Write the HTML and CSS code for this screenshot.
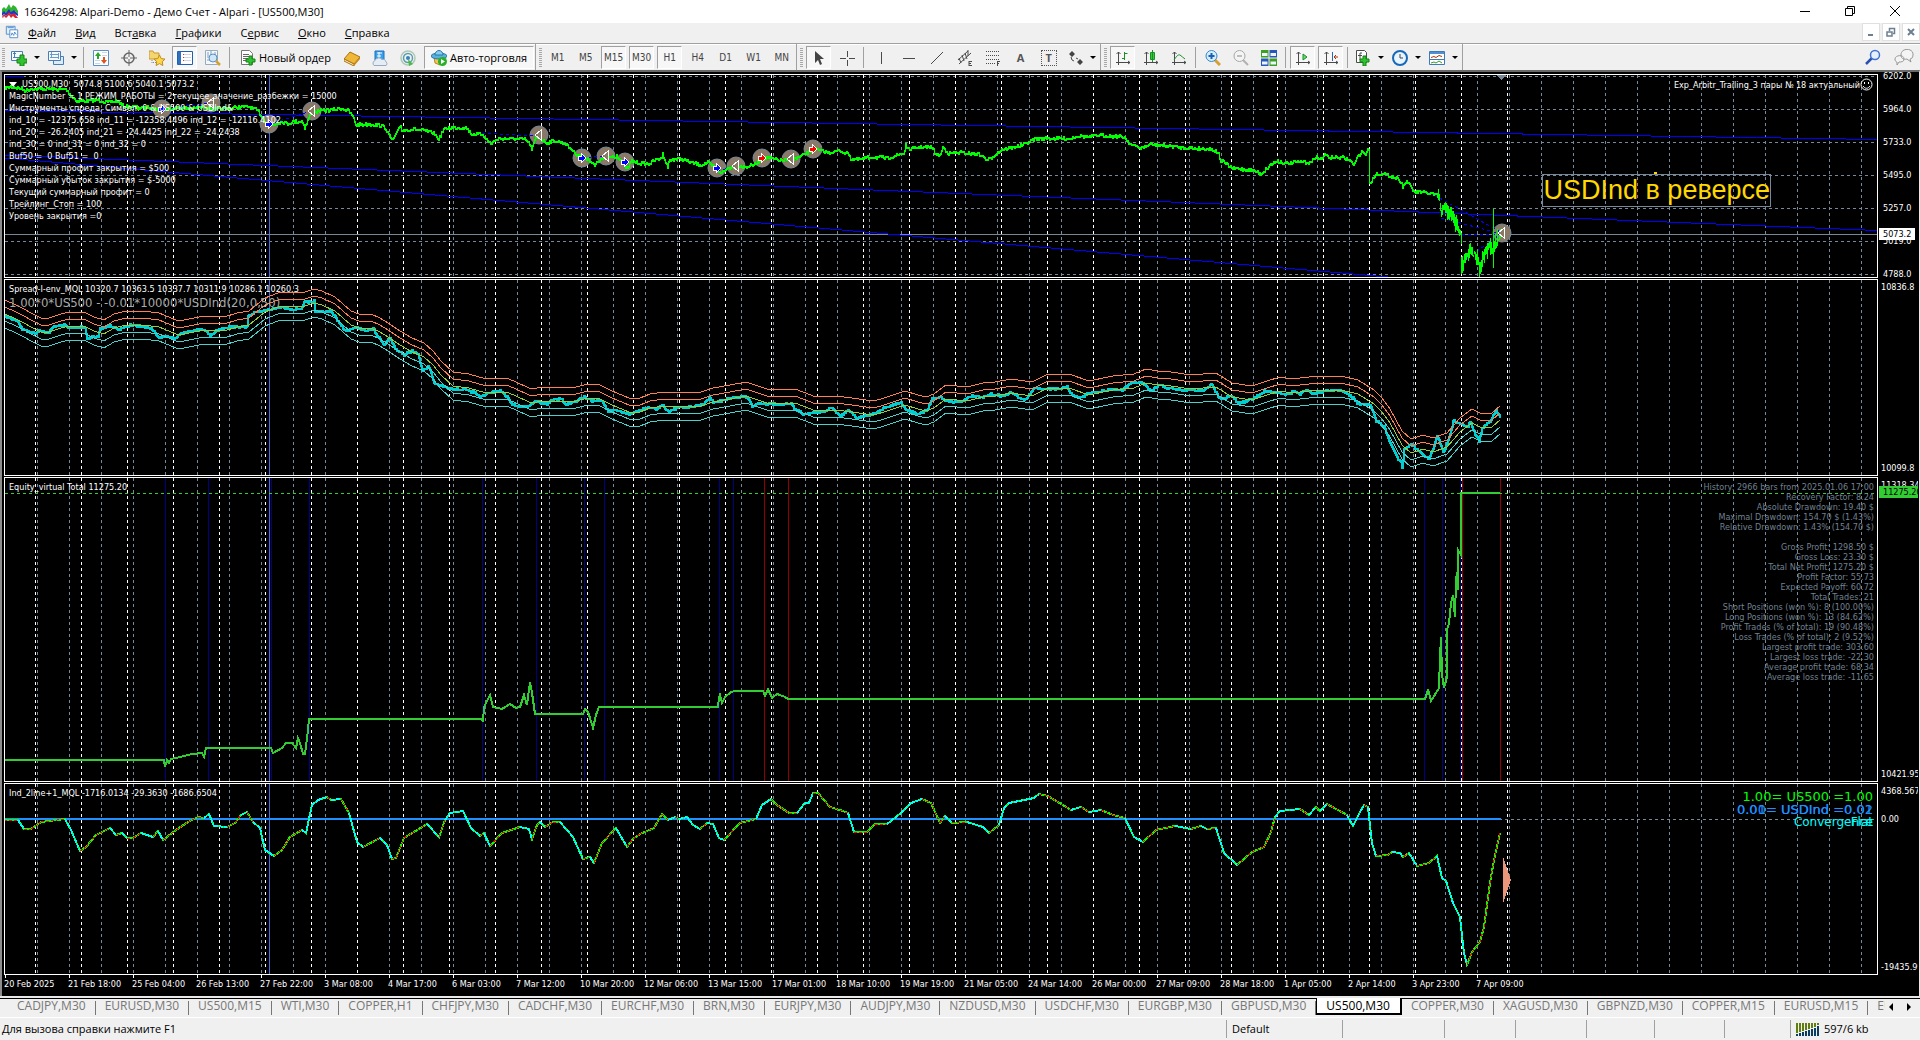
FILE: index.html
```html
<!DOCTYPE html>
<html lang="ru">

<head>
  <meta charset="UTF-8">
  <meta name="viewport" content="width=device-width, initial-scale=1.0">
  <title>16364298: Alpari-Demo - Демо Счет - Alpari - [US500,M30]</title>
  <link rel="stylesheet" href="styles.css">
</head>

<body>
  <header class="titlebar">
    <svg class="logo" viewBox="0 0 16 16">
      <path d="M0 6l2-2 2 2 3-5 2 4 2-3 3 2 2 4v3l-3-3-3 2-2-2-3 4-2-3-3 2z" fill="#2db52d" />
      <path d="M0 10l2-2 2 2 3-4 2 3 3-2 4 4v2l-4-2-3 1-2-2-3 3-2-2-2 2z" fill="#2438c8" />
      <path d="M0 14l2-3 2 2 3-4 2 3 3-2 4 5H13l-2-2-2 2-2-3-3 3-2-2-1 2z" fill="#d8242c" />
    </svg>
    <span class="caption">16364298: Alpari-Demo - Демо Счет - Alpari - [US500,M30]</span>
    <div class="window_buttons">
      <button aria-label="Свернуть"><svg viewBox="0 0 10 10"><path d="M0 5.5h10" /></svg></button>
      <button aria-label="Восстановить"><svg viewBox="0 0 10 10"><path d="M.5 2.5h7v7h-7zM2.500 2.500v-2h7v7h-2" /></svg></button>
      <button aria-label="Закрыть"><svg viewBox="0 0 10 10"><path d="M0 0l10 10M10 0L0 10" /></svg></button>
    </div>
  </header>

  <nav class="menubar">
    <svg class="menu_icon" viewBox="0 0 16 16">
      <path d="M1.500 1.500h10v9h-10z" fill="#e4f0fb" stroke="#4a86c8" />
      <path d="M5.500 5.500h9v9h-9z" fill="#fff" stroke="#4a86c8" />
      <path d="M3 3h7M7 12l1-3 2 3 1-4 2 3" fill="none" stroke="#4a86c8" />
    </svg>
    <button><u>Ф</u>айл</button>
    <button><u>В</u>ид</button>
    <button>Вст<u>а</u>вка</button>
    <button><u>Г</u>рафики</button>
    <button>С<u>е</u>рвис</button>
    <button><u>О</u>кно</button>
    <button><u>С</u>правка</button>
    <div class="mdi_buttons">
      <button aria-label="Свернуть окно"><svg viewBox="0 0 10 10"><path d="M2 8h5" /></svg></button>
      <button aria-label="Восстановить окно"><svg viewBox="0 0 10 10"><path d="M1 5h5v4H1zM3.500 4V1.500h5v5H7" stroke-width="1.500" /></svg></button>
      <button aria-label="Закрыть окно"><svg viewBox="0 0 10 10"><path d="M2 2l6 6M8 2L2 8" /></svg></button>
    </div>
  </nav>

  <div class="toolbar">
    <div class="group">
      <i class="grip"></i>
      <button class="drop" aria-label="Новый график">
        <svg viewBox="0 0 16 16">
          <path d="M.5 1.500h11v9H.5z" fill="#f4f9ff" stroke="#4a7eb0" />
          <path d="M3.500 2v6M2 7.500h8M2 3.500h3" stroke="#4a7eb0" fill="none" />
          <path d="M9 5h4v4h3v4h-3v3H9v-3H6V9h3z" fill="#2fc42f" stroke="#178017" />
        </svg>
      </button>
      <button class="drop" aria-label="Профили">
        <svg viewBox="0 0 16 16">
          <path d="M5.500 6.500h10v8h-10z" fill="#dcebfa" stroke="#4a7eb0" />
          <path d="M.5 1.500h12v9H.5z" fill="#f4f9ff" stroke="#4a7eb0" />
          <path d="M3.500 2v6M2 4.500h9M2 7.500h9M10.500 3v6" stroke="#6a9ac8" fill="none" />
        </svg>
      </button>
      <i class="sep"></i>
      <button aria-label="Обзор рынка">
        <svg viewBox="0 0 16 16">
          <path d="M.5.500h15v15H.5z" fill="#fff" stroke="#5a90c8" />
          <path d="M9 2.500h5M9 5.500h5M2 10.500h5M2 13.500h5" stroke="#c8d8e8" />
          <path d="M5 2l3 4H6v3H4V6H2z" fill="#2aa82a" />
          <path d="M11 14L8 10h2V7h2v3h2z" fill="#e05020" />
        </svg>
      </button>
      <button aria-label="Окно данных">
        <svg viewBox="0 0 16 16">
          <circle cx="8" cy="8" r="5" fill="none" stroke="#666" stroke-width="1.500" />
          <path d="M8 0v7M8 9v7M0 8h7M9 8h7" stroke="#666" />
        </svg>
      </button>
      <button aria-label="Навигатор">
        <svg viewBox="0 0 16 16">
          <path d="M0 1h4l1 2h5v6H0z" fill="#f5d570" stroke="#c89830" />
          <path d="M3 10v3M4 12.500h3" stroke="#888" stroke-dasharray="1 1" />
          <path d="M10.500 5l1.700 3.600 3.800.5-2.800 2.600.7 3.800-3.400-1.900-3.400 1.900.7-3.800L5 9.100l3.800-.5z" fill="#ffd84a" stroke="#c08a20" />
        </svg>
      </button>
      <button class="pressed" aria-label="Терминал">
        <svg viewBox="0 0 16 16">
          <path d="M.5 1.500h15v13H.5z" fill="#fff" stroke="#2060b0" />
          <path d="M1 2h3v12H1z" fill="#3070c0" />
          <path d="M6 4.500h8M6 7.500h8M6 10.500h8" stroke="#c8d8e8" />
          <path d="M6 4.500h1M6 7.500h1M6 10.500h1" stroke="#d04020" />
        </svg>
      </button>
      <button aria-label="Тестер стратегий">
        <svg viewBox="0 0 16 16">
          <path d="M.5.500h12v14H.5z" fill="#f4f8fc" stroke="#9ab" />
          <path d="M3 2v6M6 1v6M10 2v6M2 10h4" stroke="#7aa0c0" />
          <circle cx="8" cy="8" r="4" fill="#cfe6f8" stroke="#5a90c0" />
          <path d="M11 11l4 4" stroke="#d8a030" stroke-width="2.500" />
        </svg>
      </button>
      <i class="sep"></i>
      <button class="wide">
        <svg viewBox="0 0 16 16">
          <path d="M1.500.500h8l3 3v11h-11z" fill="#fff" stroke="#777" />
          <path d="M3 4.500h6M3 6.500h6M3 8.500h5M3 10.500h4" stroke="#666" />
          <path d="M9 6h3v3h3v3h-3v3H9v-3H6V9h3z" fill="#2fc42f" stroke="#178017" />
        </svg>Новый ордер
      </button>
      <button aria-label="MetaEditor">
        <svg viewBox="0 0 16 16">
          <path d="M0 9l6-7 10 5-6 7z" fill="#f0b838" stroke="#a87010" />
          <path d="M0 9v2l10 5v-2z" fill="#fff2c8" stroke="#a87010" />
          <path d="M10 16l6-7V7l-6 7z" fill="#c88818" />
        </svg>
      </button>
      <button aria-label="MQL5 Storage">
        <svg viewBox="0 0 16 16">
          <path d="M3 1h9v9H3z" fill="#3aa0ec" stroke="#1870c0" />
          <path d="M5 3h5M5 6h4M7 2v6" stroke="#fff" />
          <path d="M2 15.500a3 3 0 0 1 1-5 4 4 0 0 1 7-1 3 3 0 0 1 4 2.500 2 2 0 0 1 0 3.500z" fill="#e4ecf4" stroke="#98a8c0" />
        </svg>
      </button>
      <button aria-label="Сигналы">
        <svg viewBox="0 0 16 16">
          <circle cx="8" cy="8" r="7" fill="none" stroke="#b0c8b8" stroke-width="1.500" />
          <circle cx="8" cy="8" r="4.500" fill="none" stroke="#58a0a8" stroke-width="1.500" />
          <circle cx="8" cy="8" r="2" fill="#3880c0" />
          <path d="M8 9l1 7 4-2z" fill="#4cb848" />
        </svg>
      </button>
      <button class="wide pressed">
        <svg viewBox="0 0 16 16">
          <path d="M3 7h10v4l-4 4-5-2z" fill="#f0c850" stroke="#b88820" />
          <ellipse cx="8" cy="6" rx="8" ry="3" fill="#58b0e0" stroke="#2878a8" />
          <path d="M4 5a4 4.500 0 0 1 8 0z" fill="#88ccf0" stroke="#2878a8" />
          <circle cx="11.500" cy="11.500" r="4.500" fill="#28b028" />
          <path d="M10 9l4 2.500-4 2.500z" fill="#fff" />
        </svg>Авто-торговля
      </button>
    </div>

    <div class="group timeframes">
      <i class="grip"></i>
      <button>M1</button>
      <button>M5</button>
      <button class="pressed">M15</button>
      <button class="pressed">M30</button>
      <button class="pressed">H1</button>
      <button>H4</button>
      <button>D1</button>
      <button>W1</button>
      <button>MN</button>
    </div>

    <div class="group mono">
      <i class="grip"></i>
      <button class="pressed" aria-label="Курсор"><svg viewBox="0 0 16 16"><path d="M4 1v12l3-3 2 5 2-1-2-5h4z" fill="#444" stroke="none" /></svg></button>
      <button aria-label="Перекрестие"><svg viewBox="0 0 16 16"><path d="M8.500 1v6M8.500 10v6M1 8.500h6M10 8.500h6" /></svg></button>
      <i class="sep"></i>
      <button aria-label="Вертикальная линия"><svg viewBox="0 0 16 16"><path d="M8.500 2v12" /></svg></button>
      <button aria-label="Горизонтальная линия"><svg viewBox="0 0 16 16"><path d="M2 8.500h12" /></svg></button>
      <button aria-label="Трендовая линия"><svg viewBox="0 0 16 16"><path d="M2 14L14 2" /></svg></button>
      <button aria-label="Канал"><svg viewBox="0 0 16 16"><path d="M1 10L11 1M2 14L14 3M2 8l2 5M5 5l2 6M8 3l2 6M11 0v6M12 11v5M12 11.500h3M12 13.500h2M12 15.500h3" /></svg></button>
      <button aria-label="Фибоначчи"><svg viewBox="0 0 16 16"><path d="M1 1.500h14M1 5.500h14M1 9.500h14M1 13.500h9" stroke-dasharray="1 1" /><path d="M12.500 11v5M12 11.500h3M12 13.500h2" /></svg></button>
      <button class="letter" aria-label="Текст">A</button>
      <button class="letter boxed" aria-label="Метка">T</button>
      <button class="drop" aria-label="Стрелки"><svg viewBox="0 0 16 16"><path d="M5 1l3 3-3 3-3-3zM13 9l3 3-3 3-3-3z" fill="#444" stroke="none" /><path d="M4 7l1 3 2 1M9 8l2 1" /></svg></button>
    </div>

    <div class="group axes">
      <i class="grip"></i>
      <button class="pressed" aria-label="Бары"><svg viewBox="0 0 16 16"><path d="M3.500 2v13M1 12.500h14M1.500 4l2-2 2 2M13 11l2 1.500-2 1.500" /><path d="M9.500 2v8M9.500 3.500h3M7 8.500h2.500" class="green" /></svg></button>
      <button aria-label="Свечи"><svg viewBox="0 0 16 16"><path d="M3.500 2v13M1 12.500h14M1.500 4l2-2 2 2M13 11l2 1.500-2 1.500" /><path d="M9.500 0v12M7.500 2.500h4v7h-4z" class="green" fill="#3c3" /></svg></button>
      <button aria-label="Линия"><svg viewBox="0 0 16 16"><path d="M3.500 2v13M1 12.500h14M1.500 4l2-2 2 2M13 11l2 1.500-2 1.500" /><path d="M3 10c2-3 4-6 6-5s3 3 5 4" class="green" /></svg></button>
      <i class="sep"></i>
      <button aria-label="Увеличить"><svg viewBox="0 0 16 16"><path d="M10 10l5 5" stroke="#d8a030" stroke-width="3" /><circle cx="6.500" cy="6" r="5.500" fill="#d4ecfc" stroke="#3888c8" /><path d="M3.500 6h6M6.500 3v6" stroke="#1860b0" stroke-width="2" /></svg></button>
      <button aria-label="Уменьшить"><svg viewBox="0 0 16 16"><path d="M10 10l5 5" stroke="#b0b0b0" stroke-width="2" /><circle cx="6.500" cy="6" r="5.500" fill="#f4f4f4" stroke="#a8a8a8" /><path d="M4 6h5" stroke="#888" /></svg></button>
      <button aria-label="Плитка">
        <svg viewBox="0 0 16 16">
          <path d="M0 0h7.500v7.500H0zM8.500 8.500H16V16H8.500z" fill="#3fa020" stroke="none" />
          <path d="M8.500 0H16v7.500H8.500zM0 8.500h7.500V16H0z" fill="#2858b8" stroke="none" />
          <path d="M1 3h5.500v3H1zM9.500 3H15v3H9.500zM1 11.500h5.500v3H1zM9.500 11.500H15v3H9.500z" fill="#eef4ff" stroke="none" />
        </svg>
      </button>
      <i class="sep"></i>
      <button class="pressed" aria-label="Автопрокрутка"><svg viewBox="0 0 16 16"><path d="M3.500 2v13M1 12.500h14M1.500 4l2-2 2 2M13 11l2 1.500-2 1.500" /><path d="M8 4l4 3-4 3z" class="green" fill="#6d6" /></svg></button>
      <button class="pressed" aria-label="Сдвиг графика"><svg viewBox="0 0 16 16"><path d="M3.500 2v13M1 12.500h14M1.500 4l2-2 2 2M13 11l2 1.500-2 1.500" /><path d="M9.500 2v9" stroke="#2868b0" /><path d="M15 7h-4M13 5l-2 2 2 2" stroke="#b03010" /></svg></button>
      <i class="sep"></i>
      <button class="drop" aria-label="Индикаторы">
        <svg viewBox="0 0 16 16">
          <path d="M1.500.500h8l2 2v10h-10z" fill="#fff" />
          <path d="M7 3H5v7M3 5.500h4" />
          <path d="M8 6h3v3h3v3h-3v4H8v-4H5V9h3z" fill="#2fc42f" stroke="#178017" />
        </svg>
      </button>
      <button class="drop" aria-label="Периоды"><svg viewBox="0 0 16 16"><circle cx="8" cy="8" r="7" fill="#e8f4ff" stroke="#1868b8" stroke-width="2" /><path d="M8 4v4h3" stroke="#444" /></svg></button>
      <button class="drop" aria-label="Шаблоны">
        <svg viewBox="0 0 16 16">
          <path d="M.5 1.500h15v13H.5z" fill="#fff" stroke="#4078b8" />
          <path d="M1 2h14v2H1z" fill="#5090d0" stroke="none" />
          <path d="M2 7.500l3-1 2 1 3-2 3 1" stroke="#b03010" />
          <path d="M1 9.500h14" stroke="#4078b8" />
          <path d="M2 13l3-1 2 1 3-2 3 2" stroke="#30a030" />
        </svg>
      </button>
    </div>

    <div class="toolbar_right">
      <button aria-label="Поиск"><svg viewBox="0 0 16 16"><path d="M7 9l-6 6" stroke="#2850b0" stroke-width="2.500" /><circle cx="10" cy="6" r="4.500" fill="#e4f0fc" stroke="#4070d0" stroke-width="1.500" /></svg></button>
      <button aria-label="Чат"><svg class="chat" viewBox="0 0 20 16"><path d="M7 6c0-8 13-7 12 0 0 3-2 4-3 4l1 3-4-3C9 11 7 9 7 6zM1 10c0-4 9-5 9 0 0 3-3 3-5 3l-2 3v-3c-1 0-2-1-2-3z" fill="#f4f4f4" stroke="#989898" /></svg></button>
    </div>
  </div>

  <main class="chart">
    <section class="row price">
      <div class="panel">
        <svg class="plot" data-plot="price" viewBox="5 75 1872 202" preserveAspectRatio="none"></svg>
        <div class="legend">
          <p class="symbol">US500,M30&nbsp; 5074.8 5100.6 5040.1 5073.2</p>
          <p>MagicNumber = 1 РЕЖИМ_РАБОТЫ = 2текущее_значение_разбежки = 15000</p>
          <p>Инструменты спреда, Символ: 0 &amp; US500 &amp; USDInd&amp;</p>
          <p>ind_10 = -12375.658 ind_11 = -12358.4496 ind_12 = -12116.4102</p>
          <p>ind_20 = -26.2405 ind_21 = -24.4425 ind_22 = -24.2438</p>
          <p>ind_30 = 0 ind_31 = 0 ind_32 = 0</p>
          <p>Buf50 = &nbsp;0 Buf51 = &nbsp;0</p>
          <p>Суммарный профит закрытия = $500</p>
          <p>Суммарный убыток закрытия = $-5000</p>
          <p>Текущий суммарный профит = 0</p>
          <p>Трейлинг_Стоп = 100</p>
          <p>Уровень закрытия =0</p>
        </div>
        <div class="expert">Exp_Arbitr_Trailing_3 пары № 18 актуальный<svg viewBox="0 0 13 13"><circle cx="6.500" cy="6.500" r="5.500" /><path d="M4.500 4v2M8.500 4v2M3 8c2 3 5 3 7 0" /></svg></div>
        <div class="note">USDInd в реверсе</div>
      </div>
      <div class="scale">
        <span>6202.0</span><span>5964.0</span><span>5733.0</span><span>5495.0</span><span>5257.0</span><span>5019.0</span><span>4788.0</span>
        <b class="tag current">5073.2</b>
      </div>
    </section>

    <section class="row spread">
      <div class="panel">
        <svg class="plot" data-plot="spread" viewBox="5 280 1872 195" preserveAspectRatio="none"></svg>
        <div class="legend">
          <p>Spread-I-env_MQL 10320.7 10363.5 10337.7 10311.9 10286.1 10260.3</p>
          <p class="formula">1.00*0*US500 - -0.01*10000*USDInd(20,0,50)</p>
        </div>
      </div>
      <div class="scale"><span>10836.8</span><span>10099.8</span></div>
    </section>

    <section class="row equity">
      <div class="panel">
        <svg class="plot" data-plot="equity" viewBox="5 478 1872 303" preserveAspectRatio="none"></svg>
        <div class="legend">
          <p>Equity_virtual Total 11275.20</p>
        </div>
        <div class="stats">
          <p>History: 2966 bars from 2025.01.06 17:00</p>
          <p>Recovery Factor: 8.24</p>
          <p>Absolute Drawdown: 19.40 $</p>
          <p>Maximal Drawdown: 154.70 $ (1.43%)</p>
          <p>Relative Drawdown: 1.43% (154.70 $)</p>
          <p>&nbsp;</p>
          <p>Gross Profit: 1298.50 $</p>
          <p>Gross Loss: 23.30 $</p>
          <p>Total Net Profit: 1275.20 $</p>
          <p>Profit Factor: 55.73</p>
          <p>Expected Payoff: 60.72</p>
          <p>Total Trades: 21</p>
          <p>Short Positions (won %): 8 (100.00%)</p>
          <p>Long Positions (won %): 13 (84.62%)</p>
          <p>Profit Trades (% of total): 19 (90.48%)</p>
          <p>Loss Trades (% of total): 2 (9.52%)</p>
          <p>Largest profit trade: 303.60</p>
          <p>Largest loss trade: -22.30</p>
          <p>Average profit trade: 68.34</p>
          <p>Average loss trade: -11.65</p>
        </div>
      </div>
      <div class="scale"><span>11318.34</span><span>10421.95</span><b class="tag total">11275.20</b></div>
    </section>

    <section class="row lines">
      <div class="panel">
        <svg class="plot" data-plot="lines" viewBox="5 784 1872 190" preserveAspectRatio="none"></svg>
        <div class="legend">
          <p>Ind_2line+1_MQL -1716.0134 -29.3630 -1686.6504</p>
        </div>
        <div class="weights">
          <p class="lime">1.00= US500 =1.00</p>
          <p class="blue"><span>0.00= USDInd =0.02</span><span>0.01= USDInd =0.01</span></p>
          <p class="aqua"><span>Convergence</span><span>Flat</span></p>
        </div>
      </div>
      <div class="scale"><span>4368.567</span><span>-19435.99</span><b class="tag zero">0.00</b></div>
    </section>

    <div class="times"></div>
  </main>

  <div class="tabs" role="tablist">
    <button role="tab">CADJPY,M30</button>
    <button role="tab">EURUSD,M30</button>
    <button role="tab">US500,M15</button>
    <button role="tab">WTI,M30</button>
    <button role="tab">COPPER,H1</button>
    <button role="tab">CHFJPY,M30</button>
    <button role="tab">CADCHF,M30</button>
    <button role="tab">EURCHF,M30</button>
    <button role="tab">BRN,M30</button>
    <button role="tab">EURJPY,M30</button>
    <button role="tab">AUDJPY,M30</button>
    <button role="tab">NZDUSD,M30</button>
    <button role="tab">USDCHF,M30</button>
    <button role="tab">EURGBP,M30</button>
    <button role="tab">GBPUSD,M30</button>
    <button role="tab" class="active" aria-selected="true">US500,M30</button>
    <button role="tab">COPPER,M30</button>
    <button role="tab">XAGUSD,M30</button>
    <button role="tab">GBPNZD,M30</button>
    <button role="tab">COPPER,M15</button>
    <button role="tab">EURUSD,M15</button>
    <button role="tab">EURGBP,M15</button>
    <div class="tab_arrows">
      <button aria-label="Назад"><svg viewBox="0 0 4 8"><path d="M4 0v8L0 4z" /></svg></button>
      <button aria-label="Вперед"><svg viewBox="0 0 4 8"><path d="M0 0v8l4-4z" /></svg></button>
    </div>
  </div>

  <footer class="statusbar">
    <span class="hint">Для вызова справки нажмите F1</span>
    <span class="profile">Default</span>
    <span></span><span></span><span></span><span></span><span></span><span></span>
    <span class="traffic">
      <svg viewBox="0 0 24 13">
        <path d="M1 0v10M4 0v9M7 0v8M10 0v7M13 0v6M16 0v5M19 0v4M22 0v2" stroke="#5f7d10" />
        <path d="M1 11v2M4 10v3M7 9v4M10 8v5M13 7v6M16 6v7M19 5v8M22 3v10" stroke="#0c3c60" />
      </svg>597/6 kb
    </span>
  </footer>

  <script src="script.js"></script>
</body>

</html>
```
FILE: styles.css
```css
* {
  box-sizing: border-box;
}

body {
  margin: 0;
  height: 100vh;
  display: flex;
  flex-direction: column;
  overflow: hidden;
  background-color: #f0f0f0;
  color: #000;
  font-family: "Open Sans", "Noto Sans", sans-serif;
  font-size: 11px;
}

button {
  padding: 0;
  border: none;
  background: none;
  color: inherit;
  font: inherit;
}

p {
  margin: 0;
}

svg {
  display: block;
  fill: none;
}

.titlebar {
  display: flex;
  align-items: center;
  height: 23px;
  padding-bottom: 1px;
  background-color: #fff;
}

.logo {
  width: 16px;
  height: 16px;
  margin: 0 6px 0 2px;
}

.window_buttons {
  display: flex;
  margin-left: auto;
  padding-right: 3px;
}

.window_buttons button {
  display: flex;
  justify-content: center;
  width: 45px;
}

.window_buttons svg {
  width: 10px;
  height: 10px;
  stroke: #000;
}

.menubar {
  display: flex;
  align-items: center;
  gap: 19px;
  height: 20px;
  padding: 0 0 2px 5px;
}

.menu_icon {
  width: 14px;
  height: 14px;
  margin-right: -10px;
}

.mdi_buttons {
  display: flex;
  gap: 2px;
  margin-left: auto;
}

.mdi_buttons button {
  display: flex;
  align-items: center;
  justify-content: center;
  width: 18px;
  height: 18px;
  border: 1px solid #e0e0e0;
  background-color: #fff;
}

.mdi_buttons svg {
  width: 10px;
  height: 10px;
  stroke: #6c7f90;
  stroke-width: 2;
}

.toolbar {
  display: flex;
  height: 27px;
  border-top: 1px solid #a0a0a0;
  box-shadow: inset 0 1px #fff;
}

.group {
  display: flex;
  align-items: center;
  gap: 3px;
  padding: 1px 2px 0 3px;
  border-right: 1px solid #a0a0a0;
}

.group:first-child {
  padding-left: 2px;
  padding-right: 1px;
}

.grip {
  width: 3px;
  height: 20px;
  background: repeating-linear-gradient(#a8a8a8 0 1px, #f0f0f0 1px 2px);
}

.sep {
  width: 1px;
  height: 21px;
  margin: 0 1px;
  background-color: #a0a0a0;
}

.group button {
  display: flex;
  align-items: center;
  justify-content: center;
  width: 25px;
  height: 23px;
}

.group svg,
.toolbar_right svg {
  width: 16px;
  height: 16px;
  flex: none;
}

.group .pressed {
  border: 1px solid #a0a0a0;
  border-right-color: #fff;
  border-bottom-color: #fff;
  background-color: #f7f7f7;
}

.group .drop {
  width: 34px;
  gap: 7px;
}

.drop::after {
  content: "";
  border: 3px solid transparent;
  border-top-color: #000;
  border-bottom: none;
}

.group .wide {
  width: auto;
  gap: 3px;
  padding: 0 6px;
}

.timeframes {
  color: #444;
  font-family: "DejaVu Sans Condensed", "DejaVu Sans", sans-serif;
  font-size: 10px;
}

.mono svg,
.axes svg {
  stroke: #4a4a4a;
}

.axes .green {
  stroke: #18902a;
}

.letter {
  color: #555;
  font-weight: bold;
}

.boxed::before {
  content: "";
  position: absolute;
  width: 14px;
  height: 14px;
  border: 1px dotted #555;
}

.toolbar_right {
  display: flex;
  align-items: center;
  gap: 13px;
  margin-left: auto;
  padding-right: 6px;
}

.toolbar_right .chat {
  width: 20px;
}

/* chart window */
.chart {
  flex: 1;
  min-height: 0;
  display: grid;
  grid-template-rows: 204fr 197fr 305fr 192fr 20px;
  gap: 1px;
  padding: 2px 1px 0 2px;
  border-top: 2px solid #696969;
  border-left: 2px solid #8c8c8c;
  border-right: 1px solid #e8e8e8;
  background-color: #000;
  color: #fff;
  font-family: "DejaVu Sans Condensed", "DejaVu Sans", sans-serif;
  font-size: 9px;
  line-height: 12px;
}

.row {
  display: grid;
  grid-template-columns: 1fr 40px;
  min-height: 0;
}

.panel {
  position: relative;
  min-width: 0;
  min-height: 0;
  border: 1px solid #fff;
}

.plot {
  position: absolute;
  inset: 0;
  width: 100%;
  height: 100%;
  shape-rendering: crispEdges;
}

.legend {
  position: absolute;
  top: 3px;
  left: 4px;
  white-space: nowrap;
}

.symbol {
  display: flex;
  align-items: center;
  gap: 5px;
}

.symbol::before {
  content: "";
  border: 4px solid transparent;
  border-top: 5px solid #fff;
  border-bottom: none;
}

.formula {
  margin-top: 2px;
  color: #a9a9a9;
  font-size: 13px;
}

.expert {
  position: absolute;
  top: 3px;
  right: 4px;
  display: flex;
  align-items: center;
}

.expert svg {
  width: 13px;
  height: 13px;
  stroke: #fff;
}

.note {
  position: absolute;
  top: 99px;
  right: 106px;
  border: 1px solid #778899;
  color: #ffd700;
  font-family: "Liberation Sans", Arial, sans-serif;
  font-size: 27px;
  line-height: 31px;
}

.stats {
  position: absolute;
  top: 4px;
  right: 3px;
  color: #708090;
  line-height: 10px;
  text-align: right;
}

.weights {
  position: absolute;
  top: 6px;
  right: 4px;
  font-family: "DejaVu Sans", sans-serif;
  font-size: 13px;
  line-height: 13px;
}

.weights p {
  display: grid;
  justify-items: end;
}

/* the indicator prints both states on top of each other */
.weights span {
  grid-area: 1 / 1;
}

.lime {
  color: #0f0;
}

.blue {
  color: #1e90ff;
}

.aqua {
  color: #0ff;
  font-size: 12px;
}

.scale {
  position: relative;
  display: flex;
  flex-direction: column;
  justify-content: space-between;
  min-height: 0;
  padding: 2px 0 2px 3px;
  overflow: hidden;
}

.price .scale {
  margin: -4px 0 -2px;
  padding: 0 0 0 5px;
}

.tag {
  position: absolute;
  left: 3px;
  font-weight: normal;
}

.current {
  top: 75%;
  left: 1px;
  width: 36px;
  padding-left: 4px;
  background-color: #fff;
  color: #000;
}

.total {
  top: 9px;
  left: 1px;
  right: 0;
  padding-left: 4px;
  background-color: #32cd32;
  color: #000;
}

.zero {
  top: 30px;
}

.times {
  display: flex;
  padding-top: 2px;
  white-space: nowrap;
}

.times time {
  position: relative;
  width: 64px;
}

.times time::before {
  content: "";
  position: absolute;
  top: -3px;
  left: 1px;
  width: 1px;
  height: 3px;
  background-color: #fff;
}

.tabs {
  display: flex;
  height: 22px;
  padding: 0 0 2px 8px;
  border-top: 2px solid #e8e8e8;
  border-bottom: 1px solid #fff;
  box-shadow: inset 0 1px #000;
  color: #777;
  font-size: 12px;
  line-height: 16px;
  overflow: hidden;
  position: relative;
}

.tabs > button {
  position: relative;
  flex: none;
  padding: 0 10px 1px 9px;
}

.tabs > button::after {
  content: "";
  position: absolute;
  top: 3px;
  right: 0;
  width: 1px;
  height: 14px;
  background-color: #777;
}

.tabs > .active {
  border: 1px solid #000;
  border-width: 0 2px 2px 1px;
  background-color: #fff;
  color: #000;
}

.tabs > .active::after {
  display: none;
}

.tab_arrows {
  position: absolute;
  right: 0;
  top: 1px;
  bottom: 2px;
  display: flex;
  align-items: center;
  gap: 14px;
  padding: 0 9px 0 4px;
  background-color: #f0f0f0;
}

.tab_arrows svg {
  width: 4px;
  height: 8px;
  fill: #000;
}

.statusbar {
  display: grid;
  grid-template-columns: 1fr 116px 102px 71px 71px 68px 70px 66px 130px;
  height: 22px;
  padding: 2px 0;
  line-height: 18px;
}

.statusbar span {
  padding-left: 5px;
  border-left: 1px solid #a0a0a0;
}

.statusbar .hint {
  padding-left: 2px;
  border-left: none;
}

.traffic {
  display: flex;
  align-items: center;
  gap: 4px;
}

.traffic svg {
  width: 24px;
  height: 13px;
  stroke-width: 2;
}
```
FILE: script.js
```js
"use strict"

const LEFT = 5;
const RIGHT = 1877;
const NS = "http://www.w3.org/2000/svg";

// series are stored as "x,y" samples in blocks, 2.45 units per bar pixel and 3 per value pixel
function block(x0, y0, text, kx = 2.45) {
  return text.trim().split(/\s+/).map(pair => {
    const [x, y] = pair.split(",").map(Number);
    return [x0 + x / kx, y0 + y / 3];
  });
}

const price = [
  ...block(0, 0, "11,262 25,258 50,262 58,270 70,264 160,265 170,280 185,300 210,300 240,297 262,305 285,300 300,315 320,317 345,322 360,318 390,325 410,325 430,320 470,323 500,318 530,325 590,318 610,318 630,330 650,365 665,372 690,362 705,368 720,362 740,362 745,380 760,335 790,328 810,328 830,322 850,328 862,345 870,372 900,370 925,372 940,378 955,410 960,418 975,385 979,370 983,388 1010,385 1040,390 1060,395 1073,415 1085,385 1100,380 1140,380 1155,400 1180,400 1190,415 1200,428 1220,412 1285,415 1297,432 1301,448 1310,410 1320,410 1335,425 1360,420 1385,430 1410,460 1440,475 1455,495 1465,480 1480,470 1510,465 1520,480 1535,505 1545,480 1568,488"),
  ...block(640, 0, "10,488 20,488 40,475 52,470 54,452 58,475 66,498 70,480 80,475 105,475 125,485 150,492 165,485 190,510 200,515 215,500 240,495 260,498 280,490 295,475 310,470 340,478 370,478 390,468 400,460 425,445 460,455 485,450 510,458 515,475 535,475 570,468 605,472 630,462 645,455 650,433 655,445 690,438 715,440 722,462 735,462 740,438 755,458 785,455 830,460 850,478 865,465 885,445 930,435 965,415 1000,412 1050,413 1070,405 1100,408 1120,403 1185,408 1200,430 1225,442 1250,430 1290,435 1330,440 1400,445 1415,455 1420,478 1450,502 1500,508 1520,518 1545,490 1560,480 1568,483"),
  ...block(1280, 0, "10,488 50,482 75,485 85,465 95,475 110,462 120,470 150,470 165,475 180,490 190,465 200,450 210,462 215,428 219,545 235,518 255,520 270,525 290,535 300,555 310,540 325,572 350,575 370,577 388,588")
];
const priceFall = block(1280, 0, "388,588 395,640 405,620 420,650 435,680 443,715");
const priceTail = block(1280, 0, "445,795 465,755 480,770 488,800 505,755 510,740 520,750 527,735 535,715 540,700");

const middle = [
  ...block(0, 280, "11,103 30,110 55,125 80,145 100,155 120,157 150,145 170,137 205,138 230,152 255,163 280,145 300,138 350,135 390,142 430,163 450,163 500,150 550,152 580,142 610,135 650,95 680,82 710,78 740,80 770,70 790,75 820,93 860,135 880,143 910,143 930,155 950,170 980,195 1010,215 1040,230 1060,255 1080,285 1110,318 1150,325 1190,340 1240,335 1260,345 1300,368 1330,362 1410,362 1440,355 1470,356 1500,375 1540,395"),
  ...block(640, 280, "0,395 25,383 60,379 90,382 150,378 180,365 220,357 260,348 310,369 380,369 400,377 430,394 480,390 520,396 570,406 590,400 620,387 650,375 680,387 700,394 720,385 750,357 800,362 840,350 870,348 910,340 960,349 1000,324 1050,323 1100,344 1160,329 1210,325 1240,310 1270,315 1300,318 1350,328 1410,322 1450,350 1500,360 1530,348"),
  ...block(1280, 270, "0,364 30,368 70,363 150,361 190,372 230,403 250,425 270,460 300,525 320,548 350,536 375,545 410,530 440,485 470,460 495,473 520,472 538,450")
];

const spread = [
  ...block(0, 280, "11,108 40,118 55,145 85,158 95,148 120,155 130,135 160,132 170,142 185,137 208,140 212,172 240,165 245,142 270,135 290,145 320,132 370,142 390,170 410,165 430,172 440,158 470,150 490,145 505,150 515,165 530,148 560,138 607,137 608,105 625,95 650,88 690,78 720,86 740,80 745,62 770,65 772,90 800,92 810,88 825,115 845,150 870,140 900,148 915,145 925,165 940,192 955,170 970,205 990,222 1010,208 1025,225 1035,270 1050,258 1065,308 1090,320 1115,325 1130,325 1165,335 1175,350 1200,335 1225,330 1240,345 1255,370 1270,375 1290,378 1310,360 1340,370 1350,358 1375,352 1385,370 1410,362 1430,348 1450,360 1475,360 1490,392 1510,388 1540,400"),
  ...block(640, 280, "0,388 15,380 40,385 55,372 70,392 90,380 130,378 155,370 170,350 180,365 210,355 230,350 255,347 265,352 275,375 290,367 340,370 370,368 380,385 400,398 440,395 470,380 490,405 510,387 530,410 570,400 600,380 640,365 650,385 680,400 705,385 715,355 735,347 745,358 775,365 800,355 810,345 840,350 860,340 890,345 910,335 930,352 945,355 965,320 990,325 1030,322 1045,317 1060,345 1080,350 1100,335 1130,330 1160,325 1180,328 1205,305 1230,305 1250,328 1275,312 1290,322 1330,328 1380,328 1400,310 1420,355 1450,345 1465,368 1500,355 1530,330"),
  ...block(1280, 270, "0,368 25,370 30,360 50,370 65,355 80,368 110,360 150,358 180,380 190,400 220,400 235,450 255,465 265,505 280,545 290,565 300,580 305,535 320,520 345,545 365,565 375,530 385,495 400,545 410,515 425,450 445,460 460,470 465,450 480,495 488,508 495,470 515,450 530,418 538,440")
];

const equity = [
  ...block(0, 470, "11,870 403,870 405,890 410,870 415,880 420,868 440,860 470,852 495,850 500,860 505,834 663,834 670,848 690,835 700,818 715,818 725,835 730,803 735,820 742,852 748,852 755,780 757,747 1180,747 1183,755 1186,710 1200,675 1208,712 1230,717 1250,702 1265,714 1275,710 1285,675 1290,705 1298,635 1303,670 1310,732 1428,732 1433,718 1440,725 1445,745 1453,775 1460,735 1468,712 1480,711 1568,711"),
  ...block(560, 640, "258,201 260,175 262,165 265,190 270,172 280,155 285,153 332,153 335,168 340,147 347,175 355,163 368,172 373,177 1412,177 1415,160 1418,147 1422,183 1430,160 1435,145", 1.633),
  ...block(1280, 270, "389,1250 391,1160 395,1100 397,1215 403,1255 408,1220 410,1080 415,1060 420,1000 425,975 428,1040 430,930 433,905 435,960 437,840 443,855 444,669 538,669")
];

const ratio = [
  ...block(0, 770, "11,150 45,150 60,178 75,178 100,155 160,147 175,180 195,243 210,230 235,195 270,173 283,195 300,188 312,205 325,205 345,190 375,200 387,182 400,210 430,180 460,155 485,142 500,145 512,132 525,168 555,170 575,160 590,135 605,125 620,155 637,175 650,240 672,258 690,240 710,200 740,180 750,188 765,105 780,90 800,80 810,90 835,88 855,130 875,215 890,230 930,205 948,225 960,268 970,265 990,205 1045,162 1075,200 1090,150 1103,128 1135,122 1155,175 1175,198 1187,190 1200,228 1230,190 1275,170 1295,178 1303,208 1315,165 1323,155 1335,172 1355,157 1372,155 1405,200 1428,268 1445,262 1455,280 1475,220 1510,173 1535,232 1550,208"),
  ...block(640, 770, "0,192 35,175 55,132 68,150 85,142 95,148 115,140 130,165 148,178 165,160 178,162 193,205 207,210 245,160 285,148 300,105 320,88 335,105 365,128 385,128 405,100 415,98 425,70 437,70 465,112 490,120 510,130 525,185 555,185 575,162 605,162 640,130 665,98 690,86 712,100 735,158 747,138 765,158 800,155 840,172 855,190 880,165 893,115 905,98 965,85 977,72 1000,78 1055,120 1080,112 1100,127 1130,120 1160,135 1188,143 1210,200 1232,217 1265,180 1310,168 1350,177 1375,167 1390,177 1412,175 1430,248 1462,285 1500,245 1530,230 1545,185 1555,140"),
  ...block(1280, 770, "0,123 50,118 70,135 87,112 97,123 115,102 165,135 180,168 195,125 205,105 215,110 225,220 235,258 265,255 275,245 295,248 302,260 315,248 335,288 365,280 385,257 398,325 407,332 423,400 442,440 450,550 457,585 470,545 490,515 500,470 515,340 525,270 540,190")
];

const trades = [
  ["buy", 162, 109], ["close", 211, 103], ["buy", 269, 124], ["close", 312, 111],
  ["close", 539, 135], ["buy", 582, 158], ["close", 606, 156], ["buy", 625, 162],
  ["buy", 717, 168], ["close", 736, 166], ["sell", 762, 158], ["close", 791, 159],
  ["sell", 813, 149], ["close", 1502, 233]
];

const times = ["20 Feb 2025", "21 Feb 18:00", "25 Feb 04:00", "26 Feb 13:00", "27 Feb 22:00", "3 Mar 08:00",
  "4 Mar 17:00", "6 Mar 03:00", "7 Mar 12:00", "10 Mar 20:00", "12 Mar 06:00", "13 Mar 15:00", "17 Mar 01:00",
  "18 Mar 10:00", "19 Mar 19:00", "21 Mar 05:00", "24 Mar 14:00", "26 Mar 00:00", "27 Mar 09:00",
  "28 Mar 18:00", "1 Apr 05:00", "2 Apr 14:00", "3 Apr 23:00", "7 Apr 09:00"];

let seed = 7;
function random() {
  seed = (seed * 16807) % 2147483647;
  return seed / 2147483647 - 0.5;
}

function add(svg, tag, attrs) {
  const el = document.createElementNS(NS, tag);
  Object.entries(attrs).forEach(([key, value]) => el.setAttribute(key, value));
  svg.appendChild(el);
}

function stroke(svg, d, color, width = 1, extra = {}) {
  add(svg, "path", { d, stroke: color, "stroke-width": width, fill: "none", ...extra });
}

// one value for every pixel column, with some market noise
function resample(points, noise = 0) {
  const result = [];
  for (let i = 1; i < points.length; i++) {
    const [x1, y1] = points[i - 1];
    const [x2, y2] = points[i];
    for (let x = Math.round(x1); x < Math.round(x2); x++) {
      result.push([x, y1 + (y2 - y1) * (x - x1) / (x2 - x1) + random() * noise]);
    }
  }
  result.push(points[points.length - 1]);
  return result;
}

function steps(points) {
  return points.map(([x, y], i) => {
    const px = Math.round(x);
    const py = Math.round(y) + 0.5;
    return i ? `H${px}V${py}` : `M${px} ${py}`;
  }).join("");
}

function polyline(points, shift = 0) {
  return "M" + points.map(([x, y]) => `${Math.round(x)} ${Math.round(y + shift)}`).join("L");
}

function bars(svg, points, range) {
  resample(points, range / 2).forEach(([x, y]) => {
    const half = 1 + Math.abs(random()) * range;
    stroke(svg, `M${x + 0.5} ${Math.round(y - half)}V${Math.round(y + half)}`, "#0f0");
  });
}

function grid(svg, top, bottom) {
  let gray = "";
  let white = "";
  for (let x = 37; x < RIGHT; x += 32) gray += `M${x + 0.5} ${top}V${bottom}`;
  for (let x = 35; x <= 1507; x += 46) white += `M${x + 0.5} ${top}V${bottom}`;
  stroke(svg, gray, "#778899", 1, { "stroke-dasharray": "3 3" });
  stroke(svg, white, "#fff", 1, { "stroke-dasharray": "3 3" });
  stroke(svg, `M269.500 ${top}V${bottom}`, "#4169e1");
}

function drawPrice(svg) {
  let rows = "";
  for (let y = 76; y < 277; y += 33) rows += `M${LEFT} ${y + 0.5}H${RIGHT}`;
  stroke(svg, rows, "#778899", 1, { "stroke-dasharray": "3 3" });
  grid(svg, 75, 277);
  stroke(svg, "M5 234.500H1877", "#778899");
  stroke(svg, "M5 77L24 76M5 110.500L1877 139.500M5 155L1877 230.500M5 158L1388 277", "#00f");
  trades.forEach(([type, x, y]) => {
    add(svg, "circle", { cx: x, cy: y, r: 9, fill: "#8b7968", stroke: "#778899", "stroke-width": 1, "shape-rendering": "auto" });
  });
  stroke(svg, "M162 109L211 103M269 124L312 111M482 133L535 136M582 158L606 156M717 171L736 166M1429 192L1502 233M1441 218L1502 234M1462 234H1502M1462 262L1502 233", "#00f", 1, { "stroke-dasharray": "3 3" });
  stroke(svg, "M762 158L791 159", "#f00", 1, { "stroke-dasharray": "3 3" });
  const line = resample(price, 3);
  stroke(svg, steps(line), "#0f0");
  stroke(svg, steps(line.map(([x, y]) => [x, y + 1])), "#0f0");
  bars(svg, priceFall, 14);
  bars(svg, priceTail, 15);
  stroke(svg, "M1493.500 209V268M1461.500 257V274", "#0f0");
  trades.forEach(([type, x, y]) => {
    if (type === "close") {
      add(svg, "path", { d: `M${x - 4} ${y}l6 -5v10z`, fill: "#8b7968", stroke: "#fff" });
    } else {
      add(svg, "path", { d: `M${x - 4} ${y - 2}h3v-3l5 5l-5 5v-3h-3z`, fill: type === "buy" ? "#00f" : "#f00", stroke: "#fff" });
    }
  });
  add(svg, "path", { d: "M1496 75h10l-5 5z", fill: "#778899" });
  add(svg, "rect", { x: 1654, y: 172, width: 3, height: 2, fill: "#ffd700" });
}

function drawSpread(svg) {
  grid(svg, 280, 475);
  stroke(svg, steps(resample(spread, 2)), "#00ced1", 2);
  stroke(svg, polyline(middle, -14), "#ff7f50");
  stroke(svg, polyline(middle, -7), "#ff7f50");
  stroke(svg, polyline(middle), "#9acd32");
  stroke(svg, polyline(middle, 7), "#48d1cc");
  stroke(svg, polyline(middle, 14), "#48d1cc");
}

function drawEquity(svg) {
  grid(svg, 478, 781);
  const open = [165, 208, 271, 309, 482, 536, 584, 604, 719, 733, 1424, 1442, 1460];
  const loss = [764, 788, 1462, 1500];
  stroke(svg, open.map(x => `M${x + 0.5} 478V781`).join(""), "#000080");
  stroke(svg, loss.map(x => `M${x + 0.5} 478V781`).join(""), "#900000");
  stroke(svg, "M5 493.500H1877", "#32cd32", 1, { "stroke-dasharray": "3 3" });
  stroke(svg, polyline(equity), "#32cd32", 2);
}

function drawLines(svg) {
  stroke(svg, "M5 819.500H1877", "#778899", 1, { "stroke-dasharray": "3 3" });
  grid(svg, 784, 974);
  stroke(svg, "M5 819H1501", "#1e90ff", 2);
  stroke(svg, polyline(ratio), "#0f0", 2);
  // aqua while the pair diverges from zero, red while it comes back
  for (let i = 1; i < ratio.length; i++) {
    const away = Math.abs(ratio[i][1] - 819) > Math.abs(ratio[i - 1][1] - 819);
    stroke(svg, polyline([ratio[i - 1], ratio[i]]), away ? "#0ff" : "#f00", away ? 2 : 1,
      { "stroke-dasharray": away ? "4 1" : "3 2" });
  }
  add(svg, "path", { d: "M1503 856l8 24l-8 24z", fill: "#e9967a" });
}

const draw = { price: drawPrice, spread: drawSpread, equity: drawEquity, lines: drawLines };
document.querySelectorAll(".plot").forEach(svg => draw[svg.dataset.plot](svg));

const axis = document.querySelector(".times");
times.forEach(text => {
  const time = document.createElement("time");
  time.textContent = text;
  axis.appendChild(time);
});
```
